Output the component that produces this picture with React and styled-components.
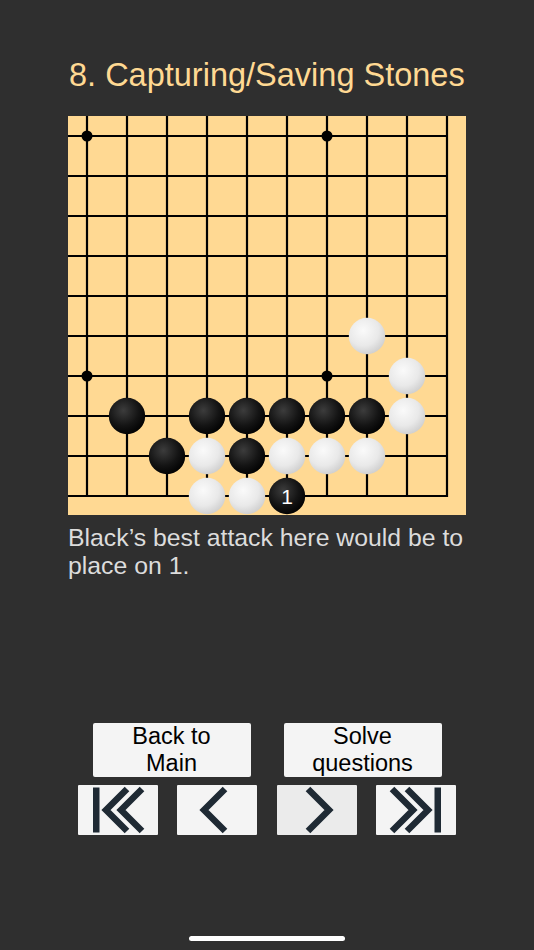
import styled, { createGlobalStyle } from "styled-components";

const GlobalStyle = createGlobalStyle`
  html, body {
    margin: 0;
    padding: 0;
    background: #2f2f2f;
  }
`;

const CELL = 40;
const OX = 19;
const OY = 20;
const LINES = 10;

const whiteStones = [
  [7, 5], [8, 6], [8, 7],
  [3, 8], [5, 8], [6, 8], [7, 8],
  [3, 9], [4, 9],
];

const blackStones = [
  [1, 7], [3, 7], [4, 7], [5, 7], [6, 7], [7, 7],
  [2, 8], [4, 8],
];

const labeled = { col: 5, row: 9, label: "1" };

const starPoints = [[0, 0], [6, 0], [0, 6], [6, 6]];

const px = (c) => OX + c * CELL;
const py = (r) => OY + r * CELL;

const Board = () => {
  const end = OX + (LINES - 1) * CELL;
  const endY = OY + (LINES - 1) * CELL;
  return (
    <BoardFrame>
      <svg width="398" height="399" viewBox="0 0 398 399">
        <defs>
          <radialGradient id="whiteStone" cx="40%" cy="35%" r="70%">
            <stop offset="0" stopColor="#fafafa" />
            <stop offset="0.6" stopColor="#e9e9e9" />
            <stop offset="1" stopColor="#cdcdcd" />
          </radialGradient>
          <radialGradient id="blackStone" cx="40%" cy="35%" r="70%">
            <stop offset="0" stopColor="#3c3c3c" />
            <stop offset="0.6" stopColor="#141414" />
            <stop offset="1" stopColor="#000000" />
          </radialGradient>
        </defs>
        {Array.from({ length: LINES }).map((_, i) => (
          <line key={"h" + i} x1="0" y1={py(i)} x2={end + 1} y2={py(i)} stroke="#000" strokeWidth="2.2" />
        ))}
        {Array.from({ length: LINES }).map((_, i) => (
          <line key={"v" + i} x1={px(i)} y1="0" x2={px(i)} y2={endY + 1} stroke="#000" strokeWidth="2.2" />
        ))}
        {starPoints.map(([c, r]) => (
          <circle key={"s" + c + r} cx={px(c)} cy={py(r)} r="5.5" fill="#000" />
        ))}
        {whiteStones.map(([c, r]) => (
          <circle key={"w" + c + r} cx={px(c)} cy={py(r)} r="18.2" fill="url(#whiteStone)" />
        ))}
        {blackStones.map(([c, r]) => (
          <circle key={"b" + c + r} cx={px(c)} cy={py(r)} r="18.2" fill="url(#blackStone)" />
        ))}
        <circle cx={px(labeled.col)} cy={py(labeled.row)} r="18.2" fill="url(#blackStone)" />
        <text
          x={px(labeled.col)}
          y={py(labeled.row) + 7.5}
          textAnchor="middle"
          fill="#ffffff"
          fontFamily="'Liberation Sans', Arial, sans-serif"
          fontSize="21"
        >
          {labeled.label}
        </text>
      </svg>
    </BoardFrame>
  );
};

const NavIcon = ({ kind }) => {
  const stroke = { fill: "none", stroke: "#1f2a34", strokeWidth: 6.5, strokeLinecap: "butt", strokeLinejoin: "miter" };
  return (
    <svg width="80" height="50" viewBox="0 0 80 50">
      {kind === "first" && (
        <>
          <rect x="15" y="2.5" width="6.5" height="45" fill="#1f2a34" />
          <polyline points="49,4 28,25 49,46" {...stroke} />
          <polyline points="64,4 43,25 64,46" {...stroke} />
        </>
      )}
      {kind === "prev" && <polyline points="48,4 27,25 48,46" {...stroke} />}
      {kind === "next" && <polyline points="31,4 52,25 31,46" {...stroke} />}
      {kind === "last" && (
        <>
          <polyline points="16,4 37,25 16,46" {...stroke} />
          <polyline points="31,4 52,25 31,46" {...stroke} />
          <rect x="58.5" y="2.5" width="6.5" height="45" fill="#1f2a34" />
        </>
      )}
    </svg>
  );
};

const App = () => {
  return (
    <Page>
      <GlobalStyle />
      <Content>
        <Title>8. Capturing/Saving Stones</Title>
        <Board />
        <Description>Black’s best attack here would be to place on 1.</Description>
      </Content>
      <ActionRow>
        <ActionButton>Back to<br />Main</ActionButton>
        <ActionButton>Solve<br />questions</ActionButton>
      </ActionRow>
      <NavRow>
        <NavButton aria-label="first"><NavIcon kind="first" /></NavButton>
        <NavButton aria-label="previous"><NavIcon kind="prev" /></NavButton>
        <NavButton aria-label="next" $active><NavIcon kind="next" /></NavButton>
        <NavButton aria-label="last"><NavIcon kind="last" /></NavButton>
      </NavRow>
      <HomeBar />
    </Page>
  );
};

const Page = styled.div`
  width: 534px;
  height: 950px;
  box-sizing: border-box;
  padding-top: 57.3px;
  display: flex;
  flex-direction: column;
  align-items: center;
  background: #2f2f2f;
  overflow: hidden;
  font-family: "Liberation Sans", Arial, sans-serif;
`;

const Content = styled.div`
  width: 398px;
  display: flex;
  flex-direction: column;
`;

const Title = styled.h1`
  margin: 0 0 0 1px;
  font-size: 32.5px;
  line-height: 37px;
  font-weight: 400;
  color: #ffd993;
  white-space: nowrap;
`;

const BoardFrame = styled.div`
  width: 398px;
  height: 399px;
  margin-top: 21.7px;
  background: #ffd993;
  display: flex;

  svg {
    display: block;
  }
`;

const Description = styled.p`
  margin: 8.8px 0 0 0;
  font-size: 24.8px;
  line-height: 28px;
  color: #dcdcdc;
`;

const ActionRow = styled.div`
  margin-top: 143.5px;
  display: flex;
  gap: 33px;
`;

const ActionButton = styled.button`
  width: 158px;
  height: 54px;
  padding: 0;
  border: none;
  border-radius: 2px;
  background: #f4f4f4;
  color: #000000;
  font-family: "Liberation Sans", Arial, sans-serif;
  font-size: 23.5px;
  line-height: 27.5px;
  text-align: center;
  overflow: visible;
  display: flex;
  align-items: center;
  justify-content: center;
`;

const NavRow = styled.div`
  margin-top: 7.7px;
  display: flex;
  gap: 19.5px;
`;

const NavButton = styled.button`
  width: 80px;
  height: 50px;
  padding: 0;
  border: none;
  border-radius: 1px;
  background: ${(p) => (p.$active ? "#ebebeb" : "#f4f4f4")};
  display: flex;
  align-items: center;
  justify-content: center;

  svg {
    display: block;
  }
`;

const HomeBar = styled.div`
  width: 156px;
  height: 5.5px;
  margin-top: 101px;
  border-radius: 3px;
  background: #ffffff;
`;

export default App;
